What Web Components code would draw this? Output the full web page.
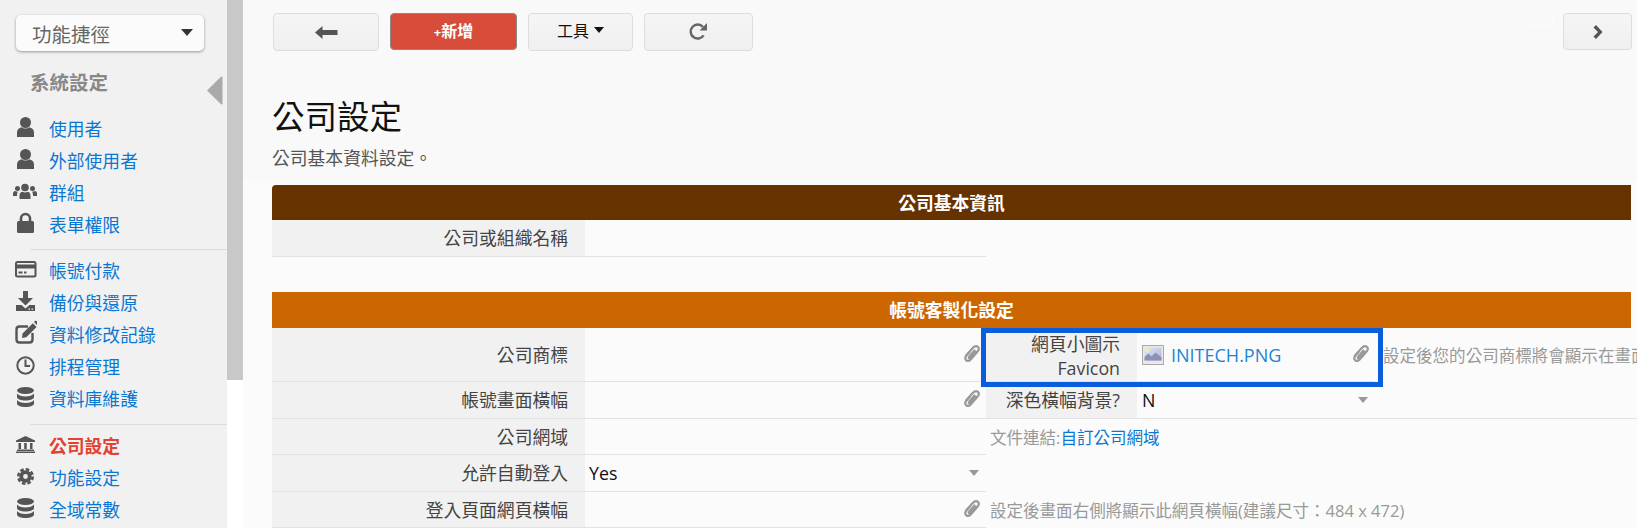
<!DOCTYPE html>
<html lang="zh-Hant"><head><meta charset="utf-8"><title>公司設定</title>
<style>
html,body{margin:0;padding:0;height:528px;overflow:hidden;background:#f9f9f9}
body{font-family:"Open Sans","Noto Sans CJK TC",sans-serif;font-size:17.8px;color:#444}
</style></head><body>
<x-app>
  <x-sidebar slot="side">
    <x-shortcut>功能捷徑</x-shortcut>
    <x-side-title>系統設定</x-side-title>
    <x-nav-item icon="user">使用者</x-nav-item>
    <x-nav-item icon="user">外部使用者</x-nav-item>
    <x-nav-item icon="group">群組</x-nav-item>
    <x-nav-item icon="lock">表單權限</x-nav-item>
    <x-divider></x-divider>
    <x-nav-item icon="card">帳號付款</x-nav-item>
    <x-nav-item icon="download">備份與還原</x-nav-item>
    <x-nav-item icon="edit">資料修改記錄</x-nav-item>
    <x-nav-item icon="clock">排程管理</x-nav-item>
    <x-nav-item icon="db">資料庫維護</x-nav-item>
    <x-divider style="margin-top:9px"></x-divider>
    <x-nav-item icon="bank" active>公司設定</x-nav-item>
    <x-nav-item icon="cog">功能設定</x-nav-item>
    <x-nav-item icon="db">全域常數</x-nav-item>
  </x-sidebar>
  <x-main slot="main">
    <x-toolbar></x-toolbar>
    <x-page-head heading="公司設定" sub="公司基本資料設定。"></x-page-head>
    <x-section heading="公司基本資訊" color="#663300" style="margin-top:15px">
      <x-row h="37">
        <x-label>公司或組織名稱</x-label><x-value></x-value>
      </x-row>
    </x-section>
    <x-section heading="帳號客製化設定" color="#cc6600" square style="margin-top:35px">
      <x-row h="54">
        <x-label>公司商標</x-label><x-value clip></x-value>
        <x-label two>網頁小圖示<br>Favicon</x-label>
        <x-value clip><x-file>INITECH.PNG</x-file></x-value>
        <x-note plain>設定後您的公司商標將會顯示在畫面</x-note>
        <x-highlight></x-highlight>
      </x-row>
      <x-row h="37">
        <x-label>帳號畫面橫幅</x-label><x-value clip></x-value>
        <x-label>深色橫幅背景?</x-label>
        <x-value caret dark wide>N</x-value>
        <x-note></x-note>
      </x-row>
      <x-row h="36">
        <x-label>公司網域</x-label><x-value></x-value>
        <x-note plain span>文件連結:<x-a>自訂公司網域</x-a></x-note>
      </x-row>
      <x-row h="37">
        <x-label>允許自動登入</x-label><x-value caret dark>Yes</x-value>
      </x-row>
      <x-row h="36">
        <x-label>登入頁面網頁橫幅</x-label><x-value clip></x-value>
        <x-note plain span>設定後畫面右側將顯示此網頁橫幅(建議尺寸：484 x 472)</x-note>
      </x-row>
    </x-section>
  </x-main>
</x-app>
<script>
const ICONS={
user:'<circle cx="12.5" cy="9.5" r="5.5"/><path d="M4 24v-4.500c0-3 2-4.500 4.500-5.300 2.400 1.700 5.600 1.700 8 0 2.500.8 4.500 2.300 4.500 5.300V24z"/>',
group:'<circle cx="12" cy="10.500" r="3.800"/><circle cx="4.500" cy="11.500" r="2.500"/><circle cx="19.500" cy="11.500" r="2.500"/><path d="M6.500 22v-3.500c0-2 1.500-3.700 3-3.700 1.500 1 3.500 1 5 0 1.500 0 3 1.700 3 3.700V22z"/><path d="M0 19v-2.500c0-1.500 1-2.500 2-2.500 1 .7 2 .8 3 .6-.7 1-1 2-1 4.400zM24 19v-2.500c0-1.500-1-2.500-2-2.500-1 .7-2 .8-3 .6.700 1 1 2 1 4.400z"/>',
lock:'<rect x="4" y="12" width="17" height="12" rx="1.500"/><path d="M8 13V9.500a4.500 4.500 0 0 1 9 0V13" fill="none" stroke="#555" stroke-width="2.600"/>',
card:'<rect x="3" y="7" width="19.500" height="14.500" rx="1.500" fill="none" stroke="#555" stroke-width="2"/><rect x="3" y="9.500" width="19.500" height="4"/><rect x="5.500" y="16.500" width="4" height="2"/><rect x="11" y="16.500" width="2.500" height="2"/>',
download:'<path d="M10 4h5v7h5l-7.500 7.500L5 11h5z"/><path d="M3 18h5.500l4 3.500 4-3.500H22v6H3z"/><rect x="15.500" y="21.500" width="1.500" height="1.300" fill="#f1f1f1"/><rect x="18.500" y="21.500" width="1.500" height="1.300" fill="#f1f1f1"/>',
edit:'<path d="M15 7.500H6.500C4.500 7.500 3.500 8.500 3.500 10.500v10c0 2 1 3 3 3h10c2 0 3-1 3-3V14" fill="none" stroke="#555" stroke-width="2.400"/><path d="M9.500 14.500 19.800 4.200l3.800 3.800L13.300 18.300l-4.300.7zM21 3l1-1c.5-.4 1-.4 1.400 0l1.500 1.500c.4.400.4 1 0 1.400l-1 1z"/>',
clock:'<circle cx="12.500" cy="14.500" r="8.200" fill="none" stroke="#555" stroke-width="2"/><path d="M12.500 8.500v6.500H8" fill="none" stroke="#555" stroke-width="2" transform="matrix(-1 0 0 1 25 0)"/>',
db:'<ellipse cx="12.500" cy="7.500" rx="8.500" ry="3.500"/><path d="M4 10.500c1.500 2 4.500 3 8.500 3s7-1 8.500-3v3.500c0 2-3.800 3.500-8.500 3.500S4 16 4 14z"/><path d="M4 17c1.500 2 4.500 3 8.500 3s7-1 8.500-3v3.500c0 2-3.800 3.500-8.500 3.500S4 22.500 4 20.500z"/>',
bank:'<path d="M12.500 6 22 10.500v1.500H3v-1.500z"/><rect x="5.500" y="13" width="2.500" height="6"/><rect x="11.200" y="13" width="2.500" height="6"/><rect x="17" y="13" width="2.500" height="6"/><rect x="4" y="19.500" width="17" height="1.500"/><rect x="3" y="21.500" width="19" height="1.500"/>',
cog:'<circle cx="12.500" cy="14.500" r="4.300" fill="none" stroke="#555" stroke-width="3.800"/><circle cx="12.500" cy="14.500" r="7.200" fill="none" stroke="#555" stroke-width="2.600" stroke-dasharray="3.600 2.055"/>'
};
function def(name,css,html,init){
  customElements.define(name,class extends HTMLElement{
    constructor(){super();const r=this.attachShadow({mode:'open'});r.innerHTML='<style>'+css+'</style>'+(typeof html==='function'?html(this):html);}
    connectedCallback(){if(init)init(this);}
  });
}
const clipIcon='<svg width="20" height="20" viewBox="0 0 20 20" fill="none" stroke="#999" stroke-width="2.200" stroke-linecap="round"><path d="M8 7.500 4.500 11.500c-1.500 1.800-1.500 3.500-.4 4.600 1.300 1.200 3.100.9 4.600-.7l6.500-7.300c1.900-2.200 2-4.100.7-5.300-1.400-1.200-3.300-.9-5.200 1.200L4 11.500"/><path d="M12.500 6.500 7.300 12.400c-.7.800-.6 1.400-.2 1.800.5.400 1.100.3 1.800-.4l5.300-6"/></svg>';

def('x-app',':host{display:flex;height:528px;overflow:hidden}.bar{width:16px;flex:none;background:linear-gradient(#c8c8c8 380px,#fff 380px)}',
 '<slot name="side"></slot><div class="bar"></div><slot name="main"></slot>');
def('x-sidebar',':host{display:block;position:relative;width:227px;flex:none;height:528px;background:#f1f1f1;padding-top:15px;box-sizing:border-box;overflow:hidden}.tog{position:absolute;left:206px;top:76px}',
 '<slot></slot><svg class="tog" width="17" height="29" viewBox="0 0 17 29" fill="#aaa"><path d="M1 14.500 15 .8c1-.8 1.500-.3 1.500.7v26c0 1-.5 1.500-1.500.7z"/></svg>');
def('x-shortcut',':host{display:flex;align-items:center;justify-content:space-between;margin-left:16px;width:188px;height:36px;box-sizing:border-box;padding:0 11px 0 16px;background:#fbfbfb;border-radius:5px;box-shadow:0 1px 3px rgba(0,0,0,.38);font-size:19.500px;color:#666}',
 '<slot></slot><svg width="12" height="7" viewBox="0 0 12 7" style="position:relative;top:-1px"><path d="M0 0h12L6 7z" fill="#333"/></svg>');
def('x-side-title',':host{display:block;height:62px;box-sizing:border-box;padding:19px 0 0 30px;font-size:19.500px;font-weight:700;line-height:26px;color:#888}','<slot></slot>');
def('x-nav-item',':host{display:flex;align-items:center;gap:12px;height:32px;padding-left:13px;color:#0a78d2;line-height:32px}:host([active]){color:#e2422f;font-weight:700}svg{flex:none;display:block;fill:#555}',
 el=>'<svg width="24" height="32" viewBox="0 0 24 32">'+ICONS[el.getAttribute('icon')]+'</svg><slot></slot>');
def('x-divider',':host{display:block;height:1px;background:#dcdcdc;margin:8px 0 5px 30px}','');
def('x-main',':host{display:block;flex:1;min-width:0;height:528px;overflow:hidden;box-sizing:border-box;padding:13px 0 0 29px;background:linear-gradient(#f9f9f9 181px,#fbfbfb 181px)}','<slot></slot>');
def('x-toolbar',`:host{display:flex;align-items:flex-start;height:37px;margin-right:5px}
.b{box-sizing:border-box;height:38px;border:1px solid #ddd;border-radius:4px;background:linear-gradient(#f5f5f5,#efefef);display:flex;align-items:center;justify-content:center;gap:5px;margin-left:1px;font-size:16px;color:#111;flex:none}
.n{background:#d84c3a;border-color:#8a8a8a;color:#fff;font-weight:700;height:37px}.n small{font-size:13px;font-weight:700}
.s{flex:1}.f{width:29px;height:10px;border:1px solid #fcfcfc;margin-right:9px}
.b span{position:relative;top:-2px}`,
`<div class="b" style="width:106px"><svg width="23" height="13" viewBox="0 0 23 13" fill="#555"><path d="M0 6.500 7.500 0v4H22.500v5H7.500v4z"/></svg></div>
<div class="b n" style="width:127px;margin-left:11px"><span><small>+</small>新增</span></div>
<div class="b" style="width:105px;margin-left:11px"><span>工具</span><svg width="10" height="6" viewBox="0 0 10 6" style="position:relative;top:-2px"><path d="M0 0h10L5 6z" fill="#111"/></svg></div>
<div class="b" style="width:109px;margin-left:11px"><svg width="19" height="19" viewBox="0 0 19 19" style="position:relative;top:-1px"><path d="M14.600 13.300A7 7 0 1 1 14 5" fill="none" stroke="#666" stroke-width="2.400"/><path d="M18 1v7.500h-7.500z" fill="#666"/></svg></div>
<div class="s"></div><div class="f"></div>
<div class="b" style="width:69px;height:37px"><svg width="10" height="14" viewBox="0 0 10 14"><path d="M3 0l6.500 7L3 14 .5 11.500 5 7 .5 2.500z" fill="#555"/></svg></div>`);
def('x-page-head',':host{display:block}h1{margin:46px 0 0;font-size:32.500px;font-weight:400;line-height:42px;color:#111}p{margin:8px 0 0;font-size:17.800px;line-height:24px;color:#555}',
 el=>'<h1>'+el.getAttribute('heading')+'</h1><p>'+el.getAttribute('sub')+'</p>');
def('x-section',`:host{display:block}.h{height:35px;margin-right:6px;display:flex;align-items:center;justify-content:center;color:#fff;font-weight:700;font-size:17.800px;border-top-left-radius:4px}`,
 el=>'<div class="h" style="background:'+el.getAttribute('color')+(el.hasAttribute('square')?';height:36px;border-radius:0':'')+'"><span style="position:relative;top:-1px">'+el.getAttribute('heading')+'</span></div><slot></slot>');
def('x-row',':host{display:grid;position:relative;grid-template-columns:313px 401px 151px 238px 262px;grid-template-rows:100%;width:1365px}',
 '<slot></slot>',el=>{el.style.height=el.getAttribute('h')+'px'});
def('x-label',':host{display:flex;align-items:center;justify-content:flex-end;box-sizing:border-box;background:#f1f1f1;border-bottom:1px solid #e2e2e2;padding-right:17px;text-align:right;line-height:28px;color:#444}:host([two]){line-height:24px;padding-top:3px}','<div><slot></slot></div>');
def('x-value',`:host{display:flex;align-items:center;position:relative;box-sizing:border-box;background:#fbfbfb;border-bottom:1px solid #e2e2e2;padding-left:4px;color:#444}
:host([wide]){padding-left:5px}:host([dark]){color:#111}.c{position:absolute;right:4px;top:50%;margin-top:-11px;display:flex}.t{position:absolute;right:7px;top:50%;margin-top:-3px;border:5px solid transparent;border-top:6px solid #999;border-bottom:0}`,
 el=>'<slot></slot>'+(el.hasAttribute('clip')?'<div class="c">'+clipIcon+'</div>':'')+(el.hasAttribute('caret')?'<div class="t"></div>':''));
def('x-file',':host{display:flex;align-items:center;gap:7px;padding-left:1px;color:#1a85d6;font-size:18px}svg{display:block}',
`<svg width="22" height="20" viewBox="0 0 22 20"><defs><linearGradient id="g" x1="0" y1="0" x2="1" y2="1"><stop offset="0" stop-color="#dfe8f5"/><stop offset="1" stop-color="#aeb4d8"/></linearGradient></defs><rect x=".5" y=".5" width="21" height="19" fill="#e9e9e9" stroke="#aaa"/><rect x="2.500" y="2.500" width="17" height="13" fill="url(#g)"/><circle cx="5.500" cy="5.500" r="2" fill="#f4ee9a"/><path d="M2.500 15.500V12l4-3.500 3 3 4-4 6 5v3z" fill="#8d90b8"/></svg><slot></slot>`);
def('x-note',`:host{display:flex;align-items:center;box-sizing:border-box;font-size:16.550px;color:#999;white-space:nowrap;overflow:hidden;min-width:0;border-bottom:1px solid #e2e2e2;grid-column:5;padding-left:8px}
:host([plain]){border-bottom:0;grid-column:5}:host([span]){grid-column:3 / span 3;padding-left:4px}`,'<slot></slot>');
def('x-a',':host{color:#0a78d2}','<slot></slot>');
def('x-highlight',':host{position:absolute;z-index:2;left:709px;top:0;width:402px;height:59px;box-sizing:border-box;border:5px solid #0a5ddc;pointer-events:none}','');
</script>
</body></html>
